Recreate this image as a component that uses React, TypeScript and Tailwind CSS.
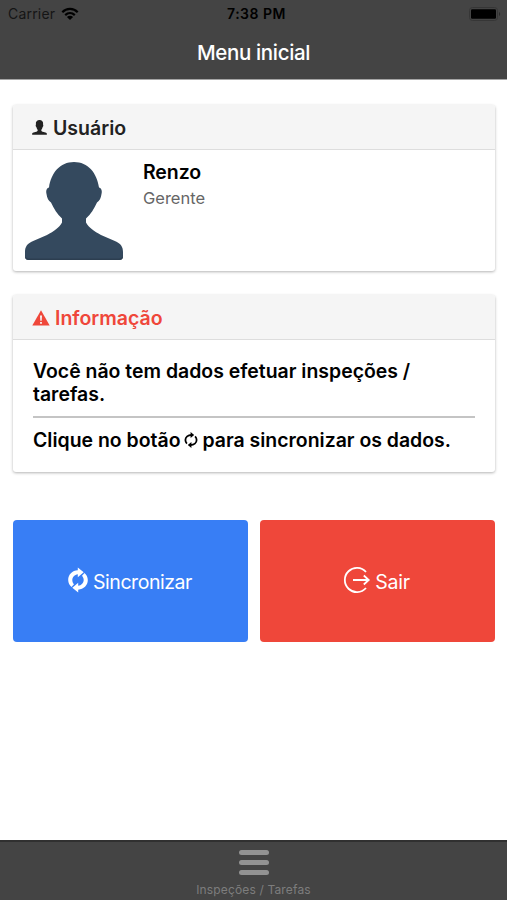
import type { ReactNode } from "react";

type IconProps = { className?: string };

function PersonIcon({ className }: IconProps) {
  return (
    <svg viewBox="0 0 100 100" className={className} fill="currentColor">
      <path d="M1 98V93C1 87 5 86 10 84L29 78C36 75 38 73 38 68C38 62 32 58 29 46C25 43 23 35 26 31C23 10 34 0 50 0S77 10 74 31C77 35 75 43 71 46C68 58 62 62 62 68C62 73 64 75 71 78L90 84C95 86 99 87 99 93V98Z" />
    </svg>
  );
}

function Avatar() {
  return (
    <svg viewBox="0 0 100 100" className="h-[100px] w-[100px] shrink-0">
      <path
        fill="#34495e"
        d="M50 1C64 1 73 12 75 26.500C77.500 27 78.300 30 77.500 33C77 37 75.500 40 73 41.500C70 48 67 53 62 57.500V61.500C65 67 70 70 77 74L92 80.500C97 83 99 86 99 91V95C99 98 97.500 99 95 99H5C2.500 99 1 98 1 95V91C1 86 3 83 8 80.500L23 74C30 70 35 67 38 61.500V57.500C33 53 30 48 27 41.500C24.500 40 23 37 22.500 33C21.700 30 22.500 27 25 26.500C27 12 36 1 50 1Z"
      />
      <path fill="#2c3e50" d="M1 94C1.500 96.500 3 97.500 5 97.500H95C97 97.500 98.500 96.500 99 94V95C99 98 97.500 99 95 99H5C2.500 99 1 98 1 95Z" />
    </svg>
  );
}

function AlertIcon({ className }: IconProps) {
  return (
    <svg viewBox="0 0 18 16" className={className}>
      <path fill="currentColor" d="M9 0.300L17.700 15.600H0.300Z" />
      <path fill="#f5f5f5" d="M8 5.500H10L9.700 10.700H8.300ZM8.100 12H9.900V13.700H8.100Z" />
    </svg>
  );
}

function LoopIcon({ className }: IconProps) {
  return (
    <svg viewBox="0 0 20 26" className={className} fill="currentColor">
      <path d="M9.800 0.500L15.700 5.200L9.800 10.200V7.200C6.600 7.600 4.300 10 4.300 13C4.300 14.800 5 16.200 6 17.300L3.500 19.900C1.500 18.200 0.200 15.800 0.200 12.900C0.200 7.700 4.300 3.500 9.800 3.300Z" />
      <path d="M10.200 25.500L4.300 20.800L10.200 15.800V18.800C13.400 18.400 15.700 16 15.700 13C15.700 11.200 15 9.800 14 8.700L16.500 6.100C18.500 7.800 19.800 10.200 19.800 13.100C19.800 18.300 15.700 22.500 10.200 22.700Z" />
    </svg>
  );
}

// Lighter loop arrows used inside the running text
function LoopThinIcon({ className }: IconProps) {
  return (
    <svg viewBox="0 0 14 16" className={className}>
      <path
        fill="none"
        stroke="currentColor"
        strokeWidth="1.800"
        d="M7.500 3C4 3 1.400 5.100 1.400 8C1.400 9.500 2 10.700 2.900 11.600M6.500 13C10 13 12.600 10.900 12.600 8C12.600 6.500 12 5.300 11.100 4.400"
      />
      <path fill="currentColor" d="M6.600 0.100L10.200 3.100L6.600 6ZM7.400 10L3.800 12.900L7.400 15.900Z" />
    </svg>
  );
}

function LogOutIcon({ className }: IconProps) {
  return (
    <svg
      viewBox="0 0 28 28"
      className={className}
      fill="none"
      stroke="currentColor"
      strokeWidth="1.800"
    >
      <path d="M23 6A12.100 12.100 0 1 0 23 22" />
      <path d="M10 14H25.500M20.800 9.500L25.700 14L20.800 18.500" />
    </svg>
  );
}

function WifiIcon() {
  return (
    <svg viewBox="0 0 18 14" className="h-[14px] w-[18px]" fill="none" stroke="#000" strokeWidth="2.200">
      <path d="M1.300 5.200C5.600 0.800 12.400 0.800 16.700 5.200M4.200 8.100C7 5.500 11 5.500 13.800 8.100" />
      <path fill="#000" stroke="none" d="M5.900 10C7.700 8.400 10.300 8.400 12.100 10L9 13.100Z" />
    </svg>
  );
}

function BatteryIcon() {
  return (
    <svg viewBox="0 0 32 14" className="h-[14px] w-8">
      <rect x="0.500" y="0.500" width="28" height="13" rx="3" fill="none" stroke="#363636" />
      <rect x="2" y="2.300" width="25" height="9.400" rx="1.200" fill="#000" />
      <path d="M30 5C31.500 5.500 31.500 8.500 30 9Z" fill="#2b2b2b" />
    </svg>
  );
}

function Card({
  icon,
  title,
  titleClass,
  className,
  children,
}: {
  icon: ReactNode;
  title: string;
  titleClass: string;
  className: string;
  children: ReactNode;
}) {
  return (
    <section
      className={`overflow-hidden rounded-[3px] bg-white shadow-[0_1px_3px_rgba(0,0,0,0.3)] ${className}`}
    >
      <h2
        className={`flex h-[45px] items-center border-b border-[#dddddd] bg-[#f5f5f5] pt-[3px] pl-[19px] text-[19.5px] font-semibold ${titleClass}`}
      >
        {icon}
        {title}
      </h2>
      {children}
    </section>
  );
}

export default function App() {
  return (
    <div className="flex h-[900px] w-[507px] flex-col overflow-hidden bg-white font-['Inter','Liberation_Sans',sans-serif] text-black">
      <header className="h-20 shrink-0 border-b border-[#a5a5a5] bg-[#444444]">
        {/* Status bar */}
        <div className="grid h-[27px] grid-cols-[1fr_auto_1fr] items-center pr-[6px] pl-2 text-[14px]">
          <div className="flex items-center gap-[6px] tracking-[0.2px] text-[#151515]">
            Carrier <WifiIcon />
          </div>
          <span className="pl-1 text-center font-semibold tracking-[0.5px]">7:38 PM</span>
          <div className="flex justify-end">
            <BatteryIcon />
          </div>
        </div>
        <h1 className="pt-[11px] text-center text-[20.5px] leading-[30px] font-medium tracking-[-0.35px] text-white">
          Menu inicial
        </h1>
      </header>

      <main className="flex-1 pt-[25px] pr-3 pl-[13px]">
        <Card
          icon={<PersonIcon className="mr-[6px] mb-[3px] h-[15px] w-[15px]" />}
          title="Usuário"
          titleClass="text-[#222222]"
          className="h-[166px]"
        >
          <div className="flex pt-[11px] pl-[11px]">
            <Avatar />
            <div className="pl-[19px]">
              <p className="text-[19.5px] leading-[22px] font-semibold tracking-[-0.1px]">Renzo</p>
              <p className="pt-[5px] text-[16.5px] leading-[20px] text-[#666666]">Gerente</p>
            </div>
          </div>
        </Card>

        <Card
          icon={<AlertIcon className="mr-[5px] mb-[2px] h-4 w-[18px]" />}
          title="Informação"
          titleClass="text-[#ef473a]"
          className="mt-6 h-[177px]"
        >
          <div className="px-5 pt-5 text-[19.45px] leading-[23px] font-semibold">
            <p>
              Você não tem dados efetuar inspeções /<br />
              tarefas.
            </p>
            <hr className="mt-[10px] mb-[11px] border-t-2 border-[#c4c4c4]" />
            <p className="flex items-center whitespace-nowrap">
              Clique no botão
              <LoopThinIcon className="mx-1 mb-[2px] h-4 w-[14px]" />
              para sincronizar os dados.
            </p>
          </div>
        </Card>

        <div className="mt-12 grid grid-cols-2 gap-3 text-[19.5px] text-white">
          <button className="flex h-[122px] items-center justify-center rounded bg-[#387ef5] pr-px">
            <LoopIcon className="mr-[5px] mb-[2px] h-[26px] w-5" />
            <span className="pt-[3px] tracking-[-0.45px]">Sincronizar</span>
          </button>
          <button className="flex h-[122px] items-center justify-center rounded bg-[#ef473a] pr-[2px]">
            <LogOutIcon className="mr-1 mb-[2px] h-7 w-7" />
            <span className="pt-[3px] tracking-[-0.2px]">Sair</span>
          </button>
        </div>
      </main>

      {/* Bottom tab */}
      <footer className="flex h-[60px] shrink-0 flex-col items-center border-t-2 border-[#303030] bg-[#444444] pt-2 text-[#929292]">
        <div className="flex flex-col gap-[5px]">
          <span className="h-[5px] w-[30px] rounded-full bg-current" />
          <span className="h-[5px] w-[30px] rounded-full bg-current" />
          <span className="h-[5px] w-[30px] rounded-full bg-current" />
        </div>
        <span className="pt-[7px] text-[12px] leading-4 tracking-[0.15px] text-[#7d7d7d]">
          Inspeções / Tarefas
        </span>
      </footer>
    </div>
  );
}
